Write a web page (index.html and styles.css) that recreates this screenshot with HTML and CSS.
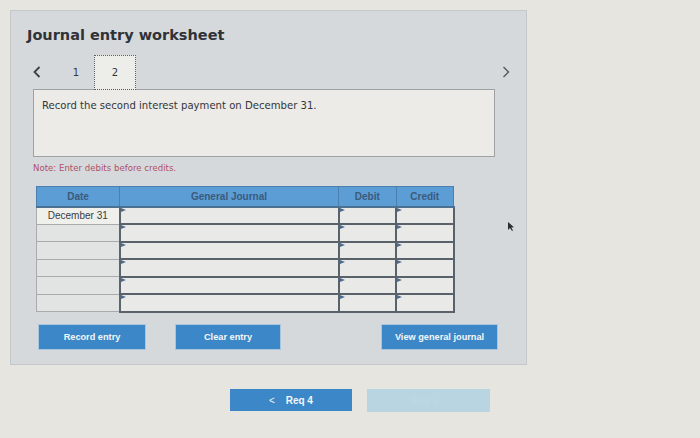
FILE: index.html
```html
<!DOCTYPE html>
<html>
<head>
<meta charset="utf-8">
<link rel="stylesheet" href="styles.css">
</head>
<body>
<div class="page">
  <div class="panel">
    <h1 class="title">Journal entry worksheet</h1>
    <div class="tabs">
      <svg class="chev" width="8" height="12" viewBox="0 0 8 12"><path d="M6.5 1 L1.5 6 L6.5 11" fill="none" stroke="#3c3f44" stroke-width="1.8"/></svg>
      <span class="tab">1</span>
      <span class="tab tab-active">2</span>
      <span class="spacer"></span>
      <svg class="chev chev-r" width="8" height="12" viewBox="0 0 8 12"><path d="M1.5 1 L6.5 6 L1.5 11" fill="none" stroke="#55595e" stroke-width="1.4"/></svg>
    </div>
    <div class="question">Record the second interest payment on December 31.</div>
    <div class="note">Note: Enter debits before credits.</div>
    <table class="journal">
      <thead>
        <tr><th class="c-date">Date</th><th class="c-gj">General Journal</th><th class="c-num">Debit</th><th class="c-num">Credit</th></tr>
      </thead>
      <tbody>
        <tr><td class="d first">December 31</td><td class="in"></td><td class="in"></td><td class="in"></td></tr>
        <tr><td class="d"></td><td class="in"></td><td class="in"></td><td class="in"></td></tr>
        <tr><td class="d"></td><td class="in"></td><td class="in"></td><td class="in"></td></tr>
        <tr><td class="d"></td><td class="in"></td><td class="in"></td><td class="in"></td></tr>
        <tr><td class="d"></td><td class="in"></td><td class="in"></td><td class="in"></td></tr>
        <tr><td class="d"></td><td class="in"></td><td class="in"></td><td class="in"></td></tr>
      </tbody>
    </table>
    <div class="actions">
      <button class="btn b-record">Record entry</button>
      <button class="btn b-clear">Clear entry</button>
      <button class="btn b-view">View general journal</button>
    </div>
  </div>
  <div class="req">
    <button class="btn b-req"><span class="lt">&lt;</span> Req 4</button>
    <button class="btn b-next">Req 5 <span class="gt">&gt;</span></button>
  </div>
  <svg class="cursor" width="8" height="11" viewBox="0 0 8 11"><path d="M1 1 L1 9 L3 7 L5 10 L6 9.4 L4.3 6.5 L7 6.3 Z" fill="#2b2e33"/></svg>
</div>
</body>
</html>
```
FILE: styles.css
```css
* { box-sizing: border-box; }
html, body { margin: 0; padding: 0; }
body {
  background: #e6e5e0;
  width: 700px;
  height: 438px;
  overflow: hidden;
  font-family: "DejaVu Sans", Verdana, sans-serif;
}
.page {
  position: relative;
  padding: 10px 0 0 10px;
  height: 438px;
}
.panel {
  width: 517px;
  height: 355px;
  background: #d5d9db;
  border: 1px solid #c4c8ca;
  padding: 14px 0 0 0;
}
.title {
  margin: 0 0 0 16px;
  height: 20px;
  line-height: 20px;
  font-size: 14.5px;
  font-weight: bold;
  color: #2f3236;
}
.tabs {
  margin: 10px 0 0 22px;
  height: 35px;
  width: 462px;
  display: flex;
  align-items: center;
}
.chev { display: block; margin-top: -2px; }
.tab {
  font-size: 10px;
  color: #33363a;
  width: 42px;
  height: 35px;
  display: flex;
  align-items: center;
  justify-content: center;
}
.tabs .tab:first-of-type { margin-left: 14px; }
.tab-active {
  margin-left: -3px;
  background: #ededea;
  border: 1.5px dotted #5a5d62;
  position: relative;
  z-index: 1;
}
.spacer { flex: 1; }
.chev-r { margin-right: -15px; }
.question {
  margin: -1px 0 0 22px;
  width: 462px;
  height: 68px;
  background: #ecebe7;
  border: 1px solid #9fa2a5;
  padding: 10px 0 0 8px;
  font-size: 10.1px;
  color: #33363a;
}
.note {
  margin: 5px 0 0 22px;
  height: 12px;
  line-height: 12px;
  font-size: 8.6px;
  color: #b05069;
}
.journal {
  margin: 12px 0 0 25px;
  border-collapse: collapse;
  table-layout: fixed;
  width: 417px;
  font-family: "Liberation Sans", Arial, sans-serif;
}
.journal th {
  background: #5c9dd6;
  color: #3b5a7c;
  font-size: 10px;
  font-weight: bold;
  height: 20px;
  padding: 0;
  border: 1px solid #4a7fae;
  border-bottom: 2px solid #4d6f90;
}
.c-date { width: 83px; }
.c-gj { width: 219px; }
.c-num { width: 57.5px; }
.journal td {
  height: 17.5px;
  padding: 0;
}
.journal td.d {
  background: #e2e4e4;
  border: 1px solid #a9acae;
  border-right: 2px solid #5b636c;
  font-size: 10px;
  color: #3a3d41;
  text-align: center;
}
.journal td.d.first { background: #efefec; }
.journal td.in {
  position: relative;
  background: #e9eae8;
  border: 2px solid #59616b;
  border-top-width: 1.5px;
}
.journal td.in::before {
  content: "";
  position: absolute;
  left: 0;
  top: 0;
  border-left: 5px solid #4d6b8f;
  border-top: 2px solid transparent;
  border-bottom: 2px solid transparent;
}
.actions {
  margin: 12px 0 0 28px;
  display: flex;
}
.btn {
  border: none;
  background: #3b87c7;
  color: #f4f6f8;
  font-family: "Liberation Sans", Arial, sans-serif;
  font-weight: bold;
  font-size: 9.2px;
  height: 24px;
  padding: 0;
  box-shadow: 0 0 0 1px #a9c6dc;
}
.b-record { width: 106px; }
.b-clear { width: 104px; margin-left: 31px; }
.b-view { width: 115px; margin-left: 102px; }
.req {
  margin: 24px 0 0 220px;
  display: flex;
}
.b-req {
  width: 122px;
  height: 22px;
  font-size: 10px;
  box-shadow: none;
}
.b-req .lt { margin-right: 8px; font-weight: normal; }
.b-next {
  width: 123px;
  height: 23px;
  margin-left: 15px;
  background: #b8d5e1;
  color: #bdd8e4;
  font-size: 10px;
  box-shadow: none;
}
.cursor {
  position: absolute;
  left: 507px;
  top: 221px;
}
```
